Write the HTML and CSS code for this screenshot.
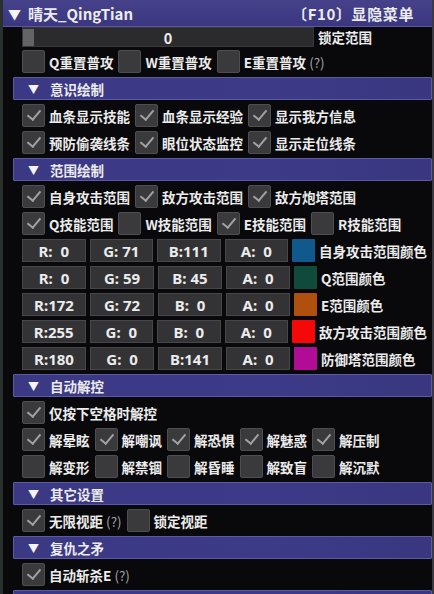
FILE: index.html
```html
<!DOCTYPE html>
<html>
<head>
<meta charset="utf-8">
<link rel="stylesheet" href="styles.css">
</head>
<body>
<div class="window">
  <div class="titlebar">
    <span class="tri-big">▼</span>
    <span class="title">晴天_QingTian</span>
    <span class="hotkey">〔F10〕显隐菜单</span>
  </div>
  <div class="content">
    <div class="row">
      <div class="slider"><div class="grab"></div><span class="sval">0</span></div>
      <span class="lbl">锁定范围</span>
    </div>
    <div class="row">
      <span class="cb"></span><span class="lbl">Q重置普攻</span>
      <span class="cb"></span><span class="lbl">W重置普攻</span>
      <span class="cb"></span><span class="lbl">E重置普攻 <span class="q">(?)</span></span>
    </div>

    <div class="header"><span class="tri">▼</span>意识绘制</div>
    <div class="row">
      <span class="cb on"></span><span class="lbl">血条显示技能</span>
      <span class="cb on"></span><span class="lbl">血条显示经验</span>
      <span class="cb on"></span><span class="lbl">显示我方信息</span>
    </div>
    <div class="row">
      <span class="cb on"></span><span class="lbl">预防偷袭线条</span>
      <span class="cb on"></span><span class="lbl">眼位状态监控</span>
      <span class="cb on"></span><span class="lbl">显示走位线条</span>
    </div>

    <div class="header"><span class="tri">▼</span>范围绘制</div>
    <div class="row">
      <span class="cb on"></span><span class="lbl">自身攻击范围</span>
      <span class="cb on"></span><span class="lbl">敌方攻击范围</span>
      <span class="cb on"></span><span class="lbl">敌方炮塔范围</span>
    </div>
    <div class="row">
      <span class="cb on"></span><span class="lbl">Q技能范围</span>
      <span class="cb"></span><span class="lbl">W技能范围</span>
      <span class="cb on"></span><span class="lbl">E技能范围</span>
      <span class="cb"></span><span class="lbl">R技能范围</span>
    </div>
    <div class="row color-row">
      <span class="field">R:  0</span><span class="field">G: 71</span><span class="field">B:111</span><span class="field">A:  0</span>
      <span class="swatch" style="background:#11598c"></span><span class="lbl">自身攻击范围颜色</span>
    </div>
    <div class="row color-row">
      <span class="field">R:  0</span><span class="field">G: 59</span><span class="field">B: 45</span><span class="field">A:  0</span>
      <span class="swatch" style="background:#0f4a3b"></span><span class="lbl">Q范围颜色</span>
    </div>
    <div class="row color-row">
      <span class="field">R:172</span><span class="field">G: 72</span><span class="field">B:  0</span><span class="field">A:  0</span>
      <span class="swatch" style="background:#b0500f"></span><span class="lbl">E范围颜色</span>
    </div>
    <div class="row color-row">
      <span class="field">R:255</span><span class="field">G:  0</span><span class="field">B:  0</span><span class="field">A:  0</span>
      <span class="swatch" style="background:#f40808"></span><span class="lbl">敌方攻击范围颜色</span>
    </div>
    <div class="row color-row">
      <span class="field">R:180</span><span class="field">G:  0</span><span class="field">B:141</span><span class="field">A:  0</span>
      <span class="swatch" style="background:#b00c96"></span><span class="lbl">防御塔范围颜色</span>
    </div>

    <div class="header"><span class="tri">▼</span>自动解控</div>
    <div class="row">
      <span class="cb on"></span><span class="lbl">仅按下空格时解控</span>
    </div>
    <div class="row">
      <span class="cb on"></span><span class="lbl">解晕眩</span>
      <span class="cb on"></span><span class="lbl">解嘲讽</span>
      <span class="cb on"></span><span class="lbl">解恐惧</span>
      <span class="cb on"></span><span class="lbl">解魅惑</span>
      <span class="cb on"></span><span class="lbl">解压制</span>
    </div>
    <div class="row">
      <span class="cb"></span><span class="lbl">解变形</span>
      <span class="cb"></span><span class="lbl">解禁锢</span>
      <span class="cb"></span><span class="lbl">解昏睡</span>
      <span class="cb"></span><span class="lbl">解致盲</span>
      <span class="cb"></span><span class="lbl">解沉默</span>
    </div>

    <div class="header"><span class="tri">▼</span>其它设置</div>
    <div class="row">
      <span class="cb on"></span><span class="lbl">无限视距 <span class="q">(?)</span></span>
      <span class="cb"></span><span class="lbl">锁定视距</span>
    </div>

    <div class="header"><span class="tri">▼</span>复仇之矛</div>
    <div class="row">
      <span class="cb on"></span><span class="lbl">自动斩杀E <span class="q">(?)</span></span>
    </div>

    <div class="header"></div>
  </div>
</div>
</body>
</html>
```

FILE: styles.css
```css
* { box-sizing: border-box; }
html, body {
  margin: 0;
  padding: 0;
  background: #0a0a0c;
  overflow: hidden;
}
body {
  width: 434px;
  height: 594px;
  font-family: "Noto Sans CJK SC", "Noto Sans", sans-serif;
  font-weight: 700;
  font-size: 13.5px;
  color: #ececec;
}
.window {
  width: 434px;
  height: 594px;
  background: #09090b;
  border-left: 3px solid #2a302c;
  border-right: 2px solid #3a3a40;
  overflow: hidden;
}
.titlebar {
  height: 27px;
  background: linear-gradient(#45428a, #3a3680);
  border-bottom: 1px solid #5a57a0;
  display: flex;
  align-items: center;
  padding-left: 5px;
  padding-right: 18px;
  font-size: 15px;
}
.tri-big {
  font-size: 13px;
  margin-right: 7px;
  color: #f4f4f4;
}
.title { flex: 1; }
.hotkey { letter-spacing: 0.6px; }

.content {
  display: flex;
  flex-direction: column;
  gap: 4px;
}
.row {
  height: 23px;
  display: flex;
  align-items: center;
  padding-left: 19px;
}
.row:first-child {
  height: 20px;
  margin-bottom: -1px;
}
.slider {
  width: 292px;
  height: 20px;
  background: #2b2b2d;
  border: 1px solid #38383b;
  position: relative;
  display: flex;
  align-items: center;
  justify-content: center;
  margin-right: 4px;
}
.grab {
  position: absolute;
  left: 0;
  top: 1px;
  width: 11px;
  height: 17px;
  background: #646466;
}
.sval { font-size: 14.5px; }

.cb {
  width: 23px;
  height: 23px;
  flex: none;
  background: #3a3a3c;
  border: 1px solid #4e4e52;
  border-radius: 2px;
  margin-right: 4px;
  position: relative;
}
.cb.on::after {
  content: "";
  position: absolute;
  left: 7px;
  top: 2px;
  width: 6px;
  height: 11px;
  border-right: 2.5px solid #a2a2a4;
  border-bottom: 2.5px solid #a2a2a4;
  transform: rotate(40deg);
}
.lbl {
  margin-right: 5px;
  white-space: nowrap;
}
.q {
  color: #a4a4a8;
  font-weight: 400;
}

.header {
  height: 23px;
  margin-left: 10px;
  background: linear-gradient(90deg, #3b3884, #3d3a88 60%, #3a3780);
  border: 1px solid #5c5aa2;
  border-radius: 1px;
  display: flex;
  align-items: center;
  padding-left: 14px;
  flex: none;
}
.tri {
  font-size: 11px;
  margin-right: 11px;
  color: #f4f4f4;
}

.color-row .field {
  width: 64px;
  height: 23px;
  background: #333336;
  border: 1px solid #47474b;
  margin-right: 4px;
  display: flex;
  align-items: center;
  justify-content: center;
  white-space: pre;
  font-family: "Noto Sans", "Open Sans", sans-serif;
  font-weight: 700;
  font-size: 15px;
}
.swatch {
  width: 23px;
  height: 23px;
  flex: none;
  margin-right: 4px;
  border-radius: 1px;
}
```
